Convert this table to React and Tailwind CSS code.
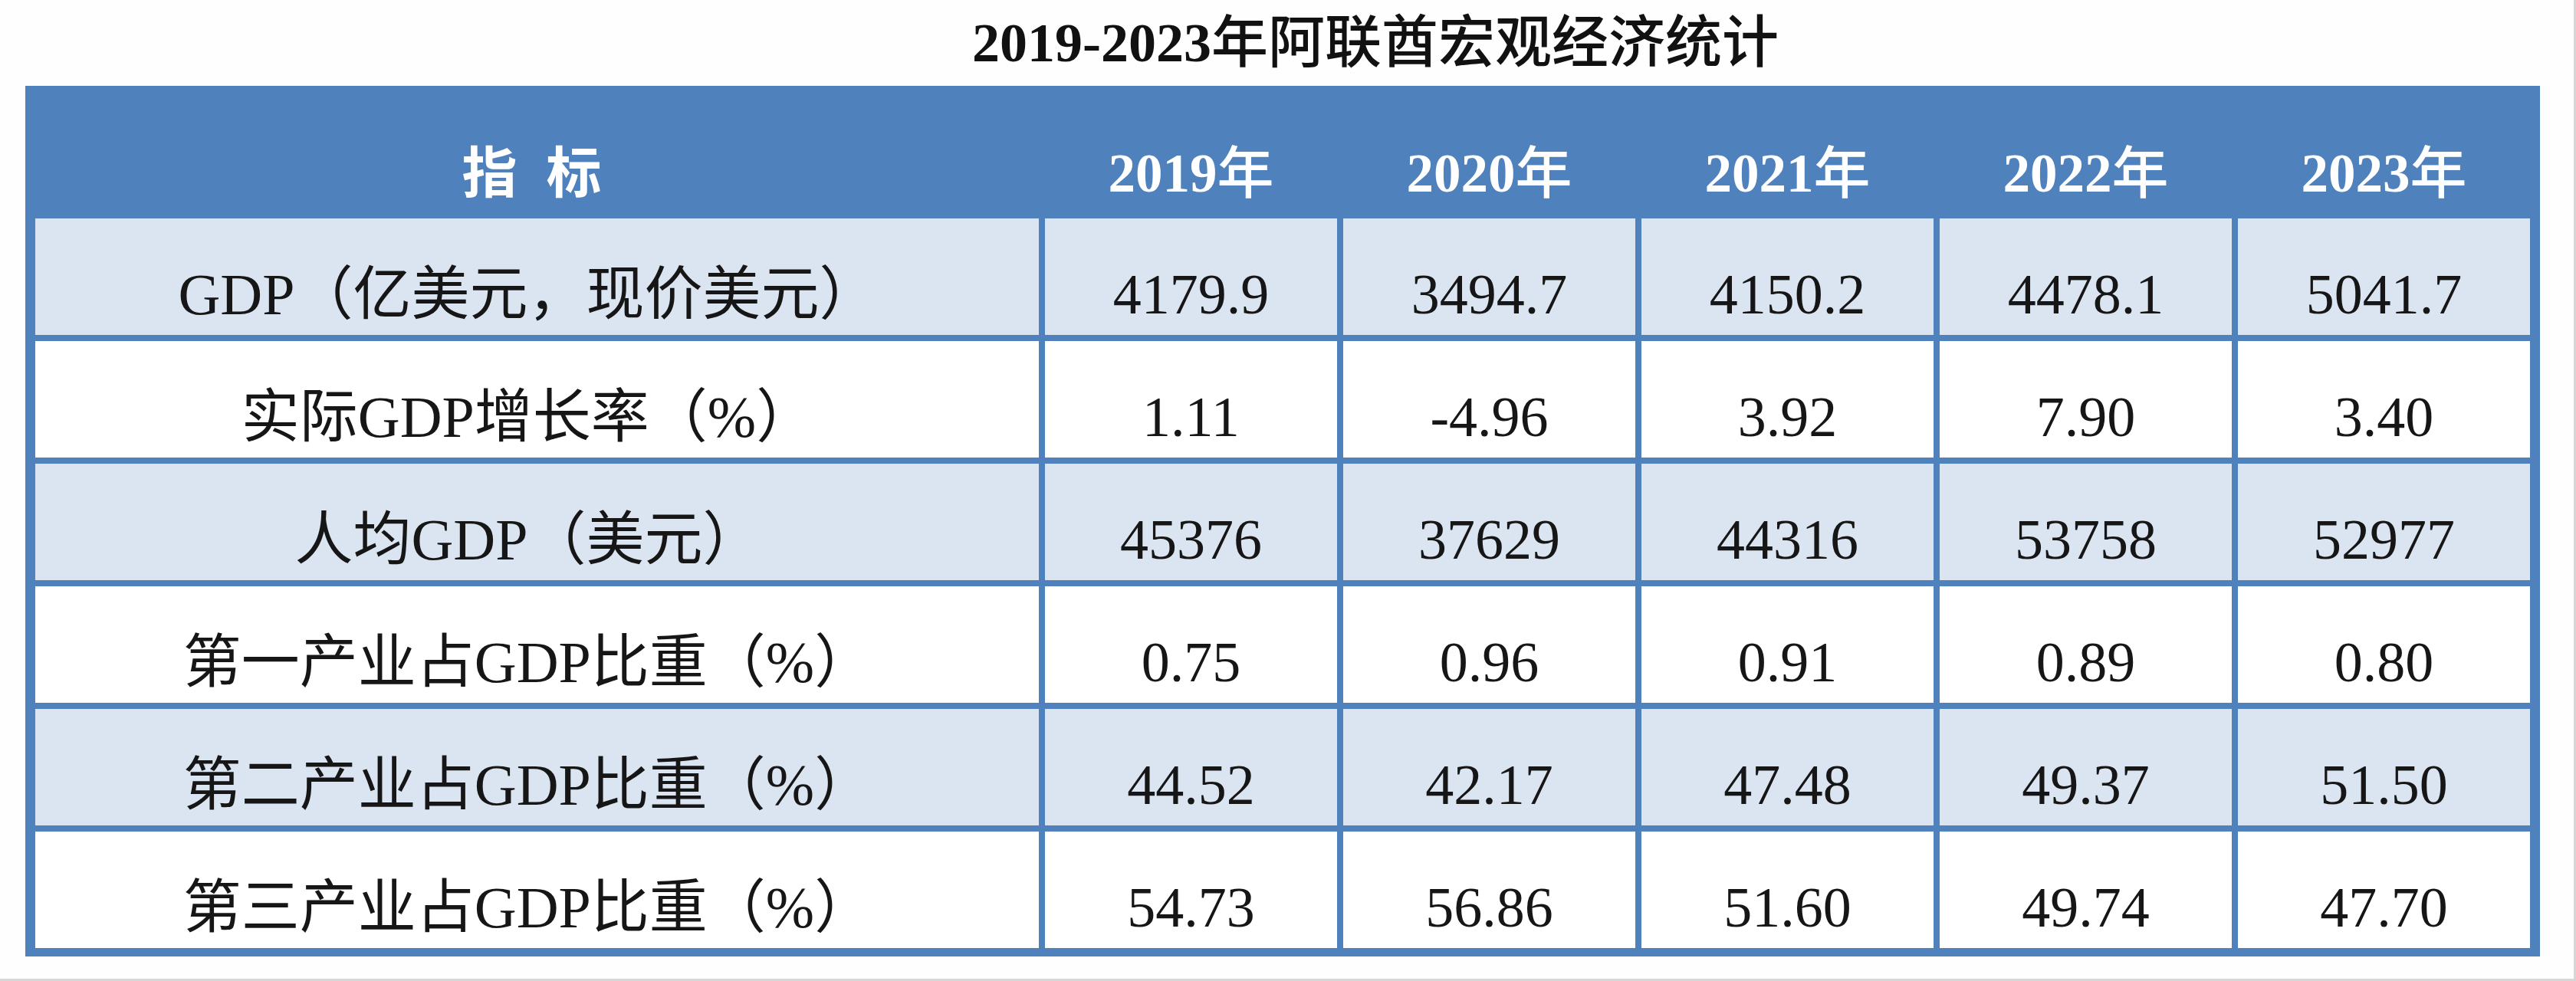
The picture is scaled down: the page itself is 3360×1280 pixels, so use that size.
import React from "react";

const rows = [
  { label: "GDP（亿美元，现价美元）", values: ["4179.9", "3494.7", "4150.2", "4478.1", "5041.7"] },
  { label: "实际GDP增长率（%）", values: ["1.11", "-4.96", "3.92", "7.90", "3.40"] },
  { label: "人均GDP（美元）", values: ["45376", "37629", "44316", "53758", "52977"] },
  { label: "第一产业占GDP比重（%）", values: ["0.75", "0.96", "0.91", "0.89", "0.80"] },
  { label: "第二产业占GDP比重（%）", values: ["44.52", "42.17", "47.48", "49.37", "51.50"] },
  { label: "第三产业占GDP比重（%）", values: ["54.73", "56.86", "51.60", "49.74", "47.70"] },
];

const years = ["2019", "2020", "2021", "2022", "2023"];

export default function App() {
  return (
    <div
      className="w-[3360px] h-[1280px] bg-[#fefefe] border-r-[3px] border-b-[3px] border-[#d6d6d6] box-border text-[#161616]"
      style={{ fontFamily: '"Liberation Serif", "Noto Sans CJK SC", serif' }}
    >
      <div className="h-[112px] flex items-center pl-[1268px] text-[72px] leading-none text-[#111]">
        <span className="font-bold">2019-2023</span>
        <span className="font-medium text-[74px]">年阿联酋宏观经济统计</span>
      </div>
      <div className="ml-[33px] w-[3280px] bg-[#4f81bd] px-[13px] pb-[11px] grid grid-cols-[1309px_repeat(5,minmax(0,1fr))] grid-rows-[165px_repeat(6,152px)] gap-[8px]">
        <div className="flex items-center justify-center pt-[64px] text-white text-[72px] leading-none font-bold tracking-[10px] pr-[4px]">
          指 标
        </div>
        {years.map((y) => (
          <div
            key={y}
            className="flex items-center justify-center pt-[64px] text-white leading-none"
          >
            <span className="font-bold text-[71px]">{y}</span>
            <span className="font-medium text-[74px]">年</span>
          </div>
        ))}
        {rows.map((r, i) => {
          const bg = i % 2 === 0 ? "bg-[#dbe4f1]" : "bg-white";
          return (
            <React.Fragment key={r.label}>
              <div
                className={`${bg} flex items-center justify-center pt-[46px] pr-[24px] text-[76px] leading-none whitespace-nowrap`}
              >
                {r.label}
              </div>
              {r.values.map((v, j) => (
                <div
                  key={j}
                  className={`${bg} flex items-center justify-center pt-[46px] text-[74px] leading-none`}
                >
                  {v}
                </div>
              ))}
            </React.Fragment>
          );
        })}
      </div>
    </div>
  );
}
